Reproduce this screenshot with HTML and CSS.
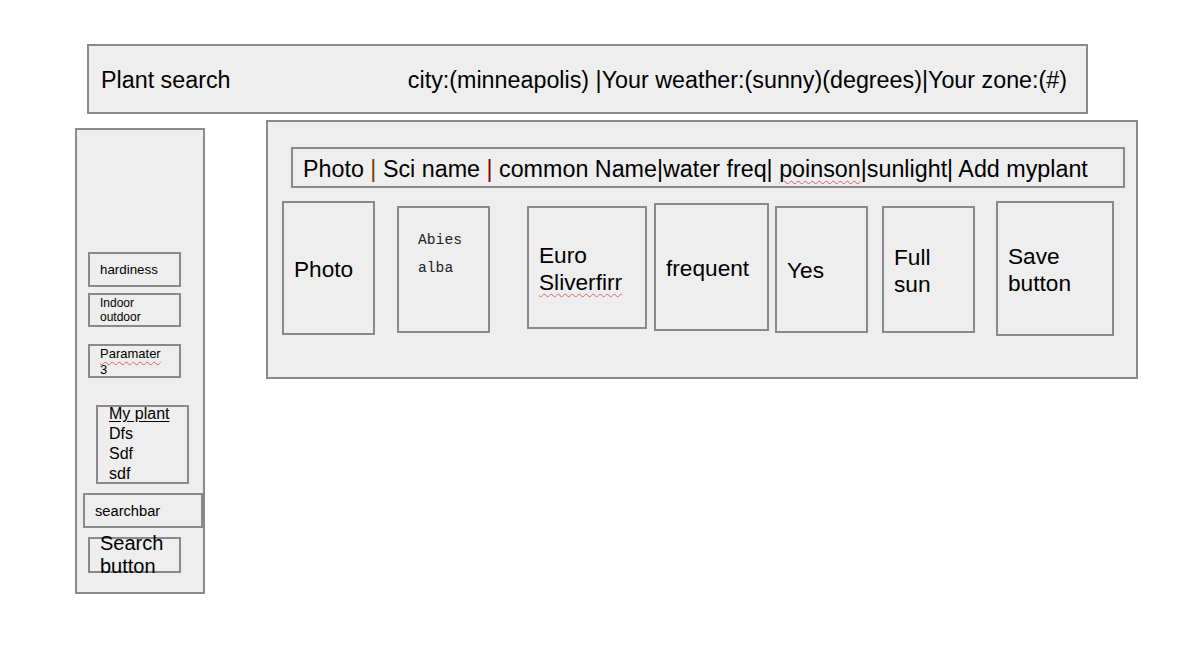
FILE: index.html
```html
<!DOCTYPE html>
<html lang="en">
<head>
<meta charset="utf-8">
<title>Plant search wireframe</title>
<link rel="stylesheet" href="styles.css">
</head>
<body>
  <header class="topbar">
    <span class="title">Plant search</span>
    <span class="status">city:(minneapolis) |Your weather:(sunny)(degrees)|Your zone:(#)</span>
  </header>

  <div class="workspace">
    <aside class="sidebar">
      <div class="box filter f-hardiness"><span class="t">hardiness</span></div>
      <div class="box filter f-indoor"><span class="t">Indoor<br>outdoor</span></div>
      <div class="box filter f-param"><span class="t"><span class="typo">Paramater</span><br>3</span></div>
      <div class="box myplant">
        <div class="list"><span class="ul">My plant</span><br>Dfs<br>Sdf<br>sdf</div>
      </div>
      <div class="box searchbar"><span class="t">searchbar</span></div>
      <div class="box searchbtn"><span class="t">Search<br>button</span></div>
    </aside>

    <main class="results">
      <div class="box colhead"><span class="t">Photo <span class="p1">|</span> Sci name <span class="p2">|</span> common Name|water freq| <span class="typo">poinson</span>|sunlight| Add myplant</span></div>
      <div class="cards">
        <div class="box card c-photo"><span class="t">Photo</span></div>
        <div class="box card c-sci"><span class="t">Abies<br>alba</span></div>
        <div class="box card c-common"><span class="t">Euro<br><span class="typo">Sliverfirr</span></span></div>
        <div class="box card c-water"><span class="t">frequent</span></div>
        <div class="box card c-poison"><span class="t">Yes</span></div>
        <div class="box card c-sun"><span class="t">Full<br>sun</span></div>
        <div class="box card c-save"><span class="t">Save<br>button</span></div>
      </div>
    </main>
  </div>
</body>
</html>
```

FILE: styles.css
```css
* { box-sizing: border-box; }

html, body {
  margin: 0;
  padding: 0;
  background: #ffffff;
}

body {
  width: 1190px;
  height: 668px;
  overflow: hidden;
  font-family: "Liberation Sans", Arial, sans-serif;
  color: #000;
}

.box {
  background: #eeeeee;
  border: 2px solid #8a8a8a;
}

.t { display: block; white-space: nowrap; }

/* top bar */
.topbar {
  margin: 44px 0 0 87px;
  width: 1001px;
  height: 70px;
  background: #eeeeee;
  border: 2px solid #8a8a8a;
  display: flex;
  align-items: center;
  justify-content: space-between;
  padding: 2px 19px 0 12px;
  font-size: 23.3px;
}

/* layout below */
.workspace {
  display: flex;
  align-items: flex-start;
}

.sidebar {
  margin: 14px 0 0 75px;
  width: 130px;
  height: 466px;
  background: #eeeeee;
  border: 2px solid #8a8a8a;
  display: flex;
  flex-direction: column;
  align-items: flex-start;
}

.filter {
  width: 93px;
  display: flex;
  align-items: center;
  padding-left: 10px;
  margin-left: 11px;
}

.f-hardiness {
  margin-top: 122px;
  height: 35px;
  font-size: 13.33px;
}

.f-indoor {
  margin-top: 6px;
  height: 34px;
  font-size: 12px;
  line-height: 14px;
}

.f-param {
  margin-top: 17px;
  height: 34px;
  font-size: 13px;
  line-height: 15.5px;
  padding-top: 1px;
}

.myplant {
  margin: 27px 0 0 19px;
  width: 93px;
  height: 79px;
  padding: 0 0 0 11px;
  font-size: 16px;
  line-height: 20px;
  white-space: nowrap;
}

.list { margin-top: -3px; }

.ul {
  text-decoration: underline;
  text-underline-offset: 2px;
}

.searchbar {
  margin: 9px 0 0 6px;
  width: 120px;
  height: 35px;
  display: flex;
  align-items: center;
  padding-left: 10px;
  font-size: 14.67px;
}

.searchbtn {
  margin: 9px 0 0 11px;
  width: 93px;
  height: 36px;
  display: flex;
  align-items: center;
  padding-left: 10px;
  font-size: 20px;
  line-height: 23px;
}

.typo {
  text-decoration: underline wavy #e06060;
  text-decoration-thickness: 1px;
  text-underline-offset: 3px;
}

/* results panel */
.results {
  margin: 6px 0 0 61px;
  width: 872px;
  height: 259px;
  background: #eeeeee;
  border: 2px solid #8a8a8a;
}

.colhead {
  margin: 25px 0 0 23px;
  width: 834px;
  height: 41px;
  display: flex;
  align-items: center;
  padding: 3px 0 0 10px;
  font-size: 23.3px;
}

.colhead .t { white-space: pre; }

.p1 { color: #7a3d00; }
.p2 { color: #8a0000; }

.cards {
  display: flex;
  align-items: flex-start;
  margin: 13px 0 0 14px;
}

.card {
  display: flex;
  align-items: center;
  padding: 2px 0 0 10px;
  font-size: 22.67px;
  line-height: 27px;
}

.c-photo  { width: 93px;  height: 134px; }
.c-sci    { width: 93px;  height: 127px; margin: 5px 0 0 22px;
            align-items: flex-start; padding: 18px 0 0 19px;
            font-family: "Liberation Mono", "Courier New", monospace; font-size: 14.67px; line-height: 28px; color: #222; }
.c-common { width: 120px; height: 123px; margin: 5px 0 0 37px; }
.c-water  { width: 115px; height: 128px; margin: 2px 0 0 7px; }
.c-poison { width: 93px;  height: 127px; margin: 5px 0 0 6px; }
.c-sun    { width: 93px;  height: 127px; margin: 5px 0 0 14px; }
.c-save   { width: 118px; height: 135px; margin: 0 0 0 21px; }
```
